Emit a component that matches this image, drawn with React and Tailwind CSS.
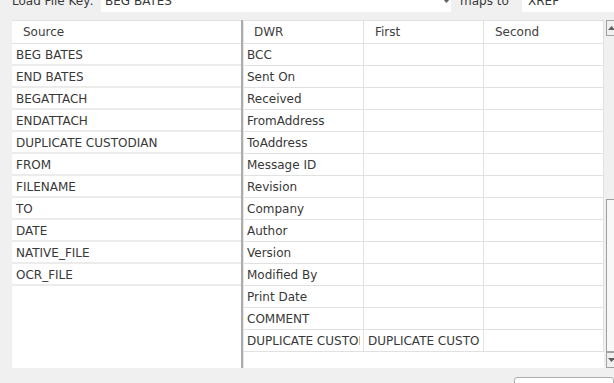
import React from "react";

const left = ["BEG BATES","END BATES","BEGATTACH","ENDATTACH","DUPLICATE CUSTODIAN","FROM","FILENAME","TO","DATE","NATIVE_FILE","OCR_FILE"];
const right = [
  ["BCC",""],["Sent On",""],["Received",""],["FromAddress",""],["ToAddress",""],["Message ID",""],["Revision",""],["Company",""],["Author",""],["Version",""],["Modified By",""],["Print Date",""],["COMMENT",""],["DUPLICATE CUSTODIAN","DUPLICATE CUSTODIAN"],
];

function Arrow({ up }) {
  return (
    <svg width="7" height="4" viewBox="0 0 7 4" className="block">
      {up ? <polygon points="0,4 7,4 3.5,0" fill="#606060" /> : <polygon points="0,0 7,0 3.5,4" fill="#606060" />}
    </svg>
  );
}

export default function App() {
  return (
    <div
      className="w-[614px] h-[383px] bg-[#f0f0f0] overflow-hidden flex flex-col text-[12px] text-[#383838]"
      style={{ fontFamily: '"DejaVu Sans", Verdana, sans-serif' }}
    >
      {/* top bar */}
      <div className="flex items-center h-[23px] -mt-[11px] shrink-0">
        <div className="pl-[12px] w-[101px] shrink-0 leading-[14px] whitespace-nowrap">Load File Key:</div>
        <div className="w-[350px] shrink-0 h-[23px] bg-white flex items-center pl-[4px] leading-[14px] relative">
          <span>BEG BATES</span>
          <div className="absolute left-[342px] top-[10px]"><Arrow /></div>
        </div>
        <div className="w-[71px] shrink-0 pl-[9px] leading-[14px] whitespace-nowrap">maps to</div>
        <div className="flex-1 h-[23px] bg-white flex items-center pl-[6px] leading-[14px]">XREF</div>
      </div>

      {/* tables */}
      <div className="flex mt-[8px] ml-[12px] h-[348px] shrink-0">
        {/* left table */}
        <div className="w-[229px] shrink-0 bg-white flex flex-col">
          <div className="h-[24px] border-t border-b border-[#e1e1e1] flex items-center pl-[11px] text-[#404040]">Source</div>
          {left.map((t) => (
            <div key={t} className="h-[22px] border-b-2 border-[#ececec] flex items-center pl-[4px] pt-[1px] whitespace-nowrap overflow-hidden">{t}</div>
          ))}
        </div>
        {/* splitter */}
        <div className="w-[3px] shrink-0 flex">
          <div className="w-[2px] bg-[#acacac]" />
          <div className="w-[1px] bg-[#e6e6e6]" />
        </div>
        {/* right table */}
        <div className="w-[360px] shrink-0 bg-white flex flex-col">
          <div className="h-[24px] border-t border-b border-[#e1e1e1] flex">
            <div className="w-[120px] border-r border-[#e1e1e1] flex items-center pl-[10px] text-[#404040]">DWR</div>
            <div className="w-[120px] border-r border-[#e1e1e1] flex items-center pl-[11px] text-[#404040]">First</div>
            <div className="w-[120px] border-r border-[#e1e1e1] flex items-center pl-[11px] text-[#404040]">Second</div>
          </div>
          {right.map(([a, b], i) => (
            <div key={i} className="h-[22px] border-b border-[#e1e1e1] flex">
              <div className="w-[120px] border-r border-[#e1e1e1] flex items-center pl-[3px]">
                <div className="w-[113px] whitespace-nowrap overflow-hidden">{a}</div>
              </div>
              <div className="w-[120px] border-r border-[#e1e1e1] flex items-center pl-[4px]">
                <div className="w-[112px] whitespace-nowrap overflow-hidden">{b}</div>
              </div>
              <div className="w-[120px] border-r border-[#e1e1e1]" />
            </div>
          ))}
        </div>
        {/* scrollbar */}
        <div className="w-[17px] ml-[2px] flex flex-col bg-[#f0f0f0] shrink-0">
          <div className="h-[16px] border border-[#a0a0a0] bg-[#f0f0f0] flex items-center justify-center pr-[6px]"><Arrow up /></div>
          <div className="flex-1 flex flex-col">
            <div className="h-[163px]" />
            <div className="flex-1 border border-[#a0a0a0] bg-[#f8f8f8]" />
          </div>
          <div className="h-[16px] border border-[#a0a0a0] bg-[#f0f0f0] flex items-center justify-center pr-[6px]"><Arrow /></div>
        </div>
      </div>

      {/* bottom */}
      <div className="flex-1 flex justify-end">
        <div className="mt-[9px] w-[100px] shrink-0 h-[30px] border border-[#adadad] rounded-[3px] bg-white" />
      </div>
    </div>
  );
}
